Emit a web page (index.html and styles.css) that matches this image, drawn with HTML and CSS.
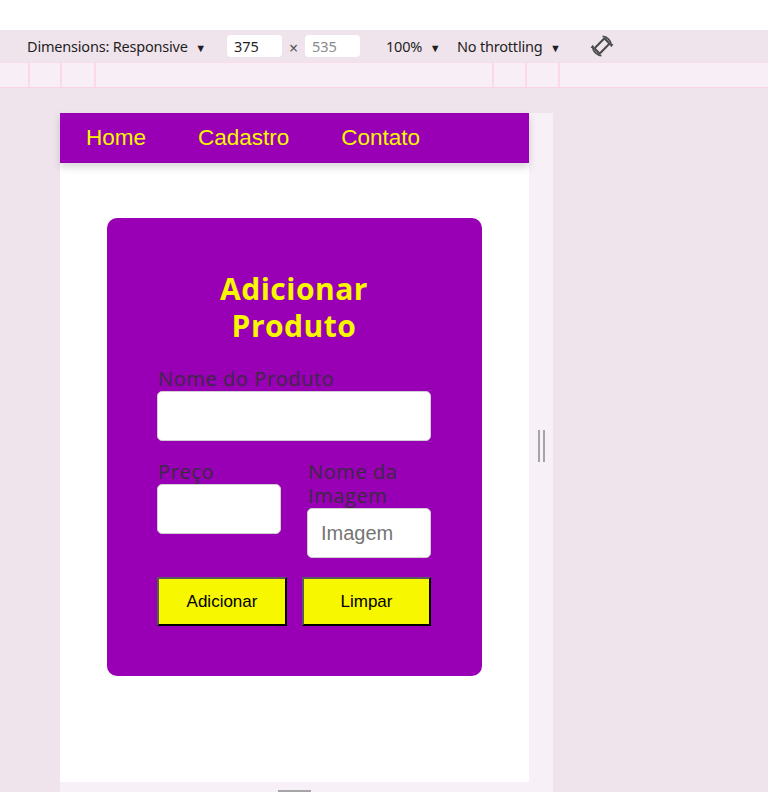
FILE: index.html
```html
<!DOCTYPE html>
<html lang="pt">
<head>
<meta charset="utf-8">
<title>Adicionar Produto</title>
<link rel="stylesheet" href="styles.css">
</head>
<body>
<div class="topbar"></div>
<div class="toolbar">
  <span class="tb-item dims">Dimensions: Responsive <span class="caret">▼</span></span>
  <span class="tb-input">375</span>
  <span class="times">×</span>
  <span class="tb-input muted">535</span>
  <span class="tb-item zoom">100% <span class="caret">▼</span></span>
  <span class="tb-item throttle">No throttling <span class="caret">▼</span></span>
  <svg class="rotate" width="26" height="26" viewBox="0 0 24 24">
    <rect x="8.6" y="5.5" width="6.8" height="13" rx="1.2" transform="rotate(45 12 12)" fill="none" stroke="#4a4a4a" stroke-width="1.9"/>
    <path d="M12.5 3.2 A8.8 8.8 0 0 1 20.6 11" fill="none" stroke="#4a4a4a" stroke-width="1.6"/>
    <path d="M18.6 10.4 L20.7 13.2 L22.6 10.2 Z" fill="#4a4a4a"/>
    <path d="M11.5 20.8 A8.8 8.8 0 0 1 3.4 13" fill="none" stroke="#4a4a4a" stroke-width="1.6"/>
    <path d="M5.4 13.6 L3.3 10.8 L1.4 13.8 Z" fill="#4a4a4a"/>
  </svg>
</div>
<div class="ruler">
  <div class="seg s1"></div><div class="seg s2"></div><div class="seg s3"></div><div class="seg s4"></div><div class="seg s5"></div><div class="seg s6"></div><div class="seg s7"></div>
</div>
<div class="stage">
  <div class="device">
    <div class="device-row">
      <div class="page">
        <nav class="nav">
          <a class="nav-link" href="#">Home</a>
          <a class="nav-link" href="#">Cadastro</a>
          <a class="nav-link" href="#">Contato</a>
        </nav>
        <form class="card">
          <h2 class="card-title">Adicionar<br>Produto</h2>
          <label class="field">
            <span class="label">Nome do Produto</span>
            <input class="input" type="text">
          </label>
          <div class="two-col">
            <label class="field">
              <span class="label">Preço</span>
              <input class="input" type="text">
            </label>
            <label class="field">
              <span class="label">Nome da Imagem</span>
              <input class="input" type="text" placeholder="Imagem">
            </label>
          </div>
          <div class="buttons">
            <button class="btn btn-add" type="button">Adicionar</button>
            <button class="btn btn-clear" type="reset">Limpar</button>
          </div>
        </form>
      </div>
      <div class="rhandle"><span class="grip"></span></div>
    </div>
    <div class="bhandle"><span class="bgrip"></span></div>
  </div>
</div>
</body>
</html>
```
FILE: styles.css
```css
* { box-sizing: border-box; }
html, body { margin: 0; padding: 0; }
body {
  width: 768px;
  height: 792px;
  overflow: hidden;
  background: #f0e4ec;
  font-family: "Open Sans", "Liberation Sans", sans-serif;
}
.topbar { height: 30px; background: #ffffff; }
.toolbar {
  height: 32px;
  display: flex;
  align-items: center;
  padding-left: 27px;
  font-family: "Noto Sans", "Open Sans", sans-serif;
  font-size: 14.5px;
  color: #1f1f1f;
  background: #f0e4ec;
}
.caret { font-size: 11px; margin-left: 4px; }
.dims { width: 200px; letter-spacing: -0.2px; }
.tb-input {
  width: 55px;
  height: 22px;
  background: #ffffff;
  border-radius: 4px;
  padding: 1px 0 0 7px;
  line-height: 20px;
}
.tb-input.muted { color: #8a8a8a; }
.times { width: 23px; text-align: center; color: #555; font-size: 16px; padding-top: 3px; }
.zoom { margin-left: 26px; width: 71px; letter-spacing: -0.2px; }
.throttle { letter-spacing: -0.2px; }
.rotate { margin-left: 28px; }
.ruler {
  height: 26px;
  display: flex;
  background: #f8eff6;
  border-top: 1px solid #fbdbe9;
  border-bottom: 1px solid #fbd3e5;
}
.seg { border-right: 2px solid #fcd9e8; height: 100%; }
.s1 { width: 30px; }
.s2 { width: 32px; }
.s3 { width: 34px; }
.s4 { width: 398px; }
.s5 { width: 33px; }
.s6 { width: 33px; }
.s7 { flex: 1; border-right: none; }
.stage { padding: 25px 0 0 60px; }
.device { width: 493px; }
.device-row { display: flex; }
.page {
  width: 469px;
  height: 669px;
  background: #ffffff;
  font-family: "Liberation Sans", Arial, sans-serif;
}
.rhandle {
  width: 24px;
  background: #f8f0f7;
  display: flex;
  align-items: center;
  justify-content: center;
}
.grip {
  width: 7px;
  height: 32px;
  border-left: 2px solid #a5a5a5;
  border-right: 2px solid #a5a5a5;
  margin-top: -4px;
}
.bhandle {
  height: 12px;
  background: #f8f0f7;
  padding-left: 218px;
  padding-top: 8px;
}
.bgrip { display: block; width: 33px; height: 3px; background: #a5a5a5; }
.nav {
  height: 50px;
  background: #9900b5;
  display: flex;
  align-items: center;
  padding-left: 26px;
  gap: 52px;
  box-shadow: 0 4px 8px rgba(0, 0, 0, 0.16);
  position: relative;
}
.nav-link {
  color: #f7f700;
  text-decoration: none;
  font-size: 22.5px;
}
.card {
  margin: 55px 0 0 47px;
  width: 375px;
  height: 458px;
  background: #9900b5;
  border-radius: 10px;
  padding: 52px 51px 0 50px;
}
.card-title {
  margin: 0 0 23px;
  text-align: center;
  color: #f7f700;
  font-family: "Open Sans", sans-serif;
  font-weight: 700;
  font-size: 30px;
  line-height: 37px;
  letter-spacing: 0.5px;
}
.field { display: flex; flex-direction: column; }
.label {
  color: #3c2943;
  font-family: "Open Sans", sans-serif;
  font-size: 20px;
  line-height: 24px;
  letter-spacing: 0.6px;
  padding-left: 1px;
}
.input {
  height: 50px;
  width: 100%;
  border: 1px solid #cfcfcf;
  border-radius: 5px;
  background: #ffffff;
  padding: 0 13px;
  font-family: "Liberation Sans", Arial, sans-serif;
  font-size: 20px;
}
.input::placeholder { color: #757575; }
.two-col {
  margin-top: 19px;
  display: grid;
  grid-template-columns: 124px 124px;
  column-gap: 26px;
  align-items: start;
}
.buttons {
  margin-top: 19px;
  display: grid;
  grid-template-columns: 130px 129px;
  column-gap: 15px;
}
.btn {
  height: 49px;
  background: #f7f700;
  color: #000;
  font-family: "Liberation Sans", Arial, sans-serif;
  font-size: 17px;
  border: 2px solid;
  border-color: #5a5a5a #000 #000 #5a5a5a;
  padding: 0;
}
```
